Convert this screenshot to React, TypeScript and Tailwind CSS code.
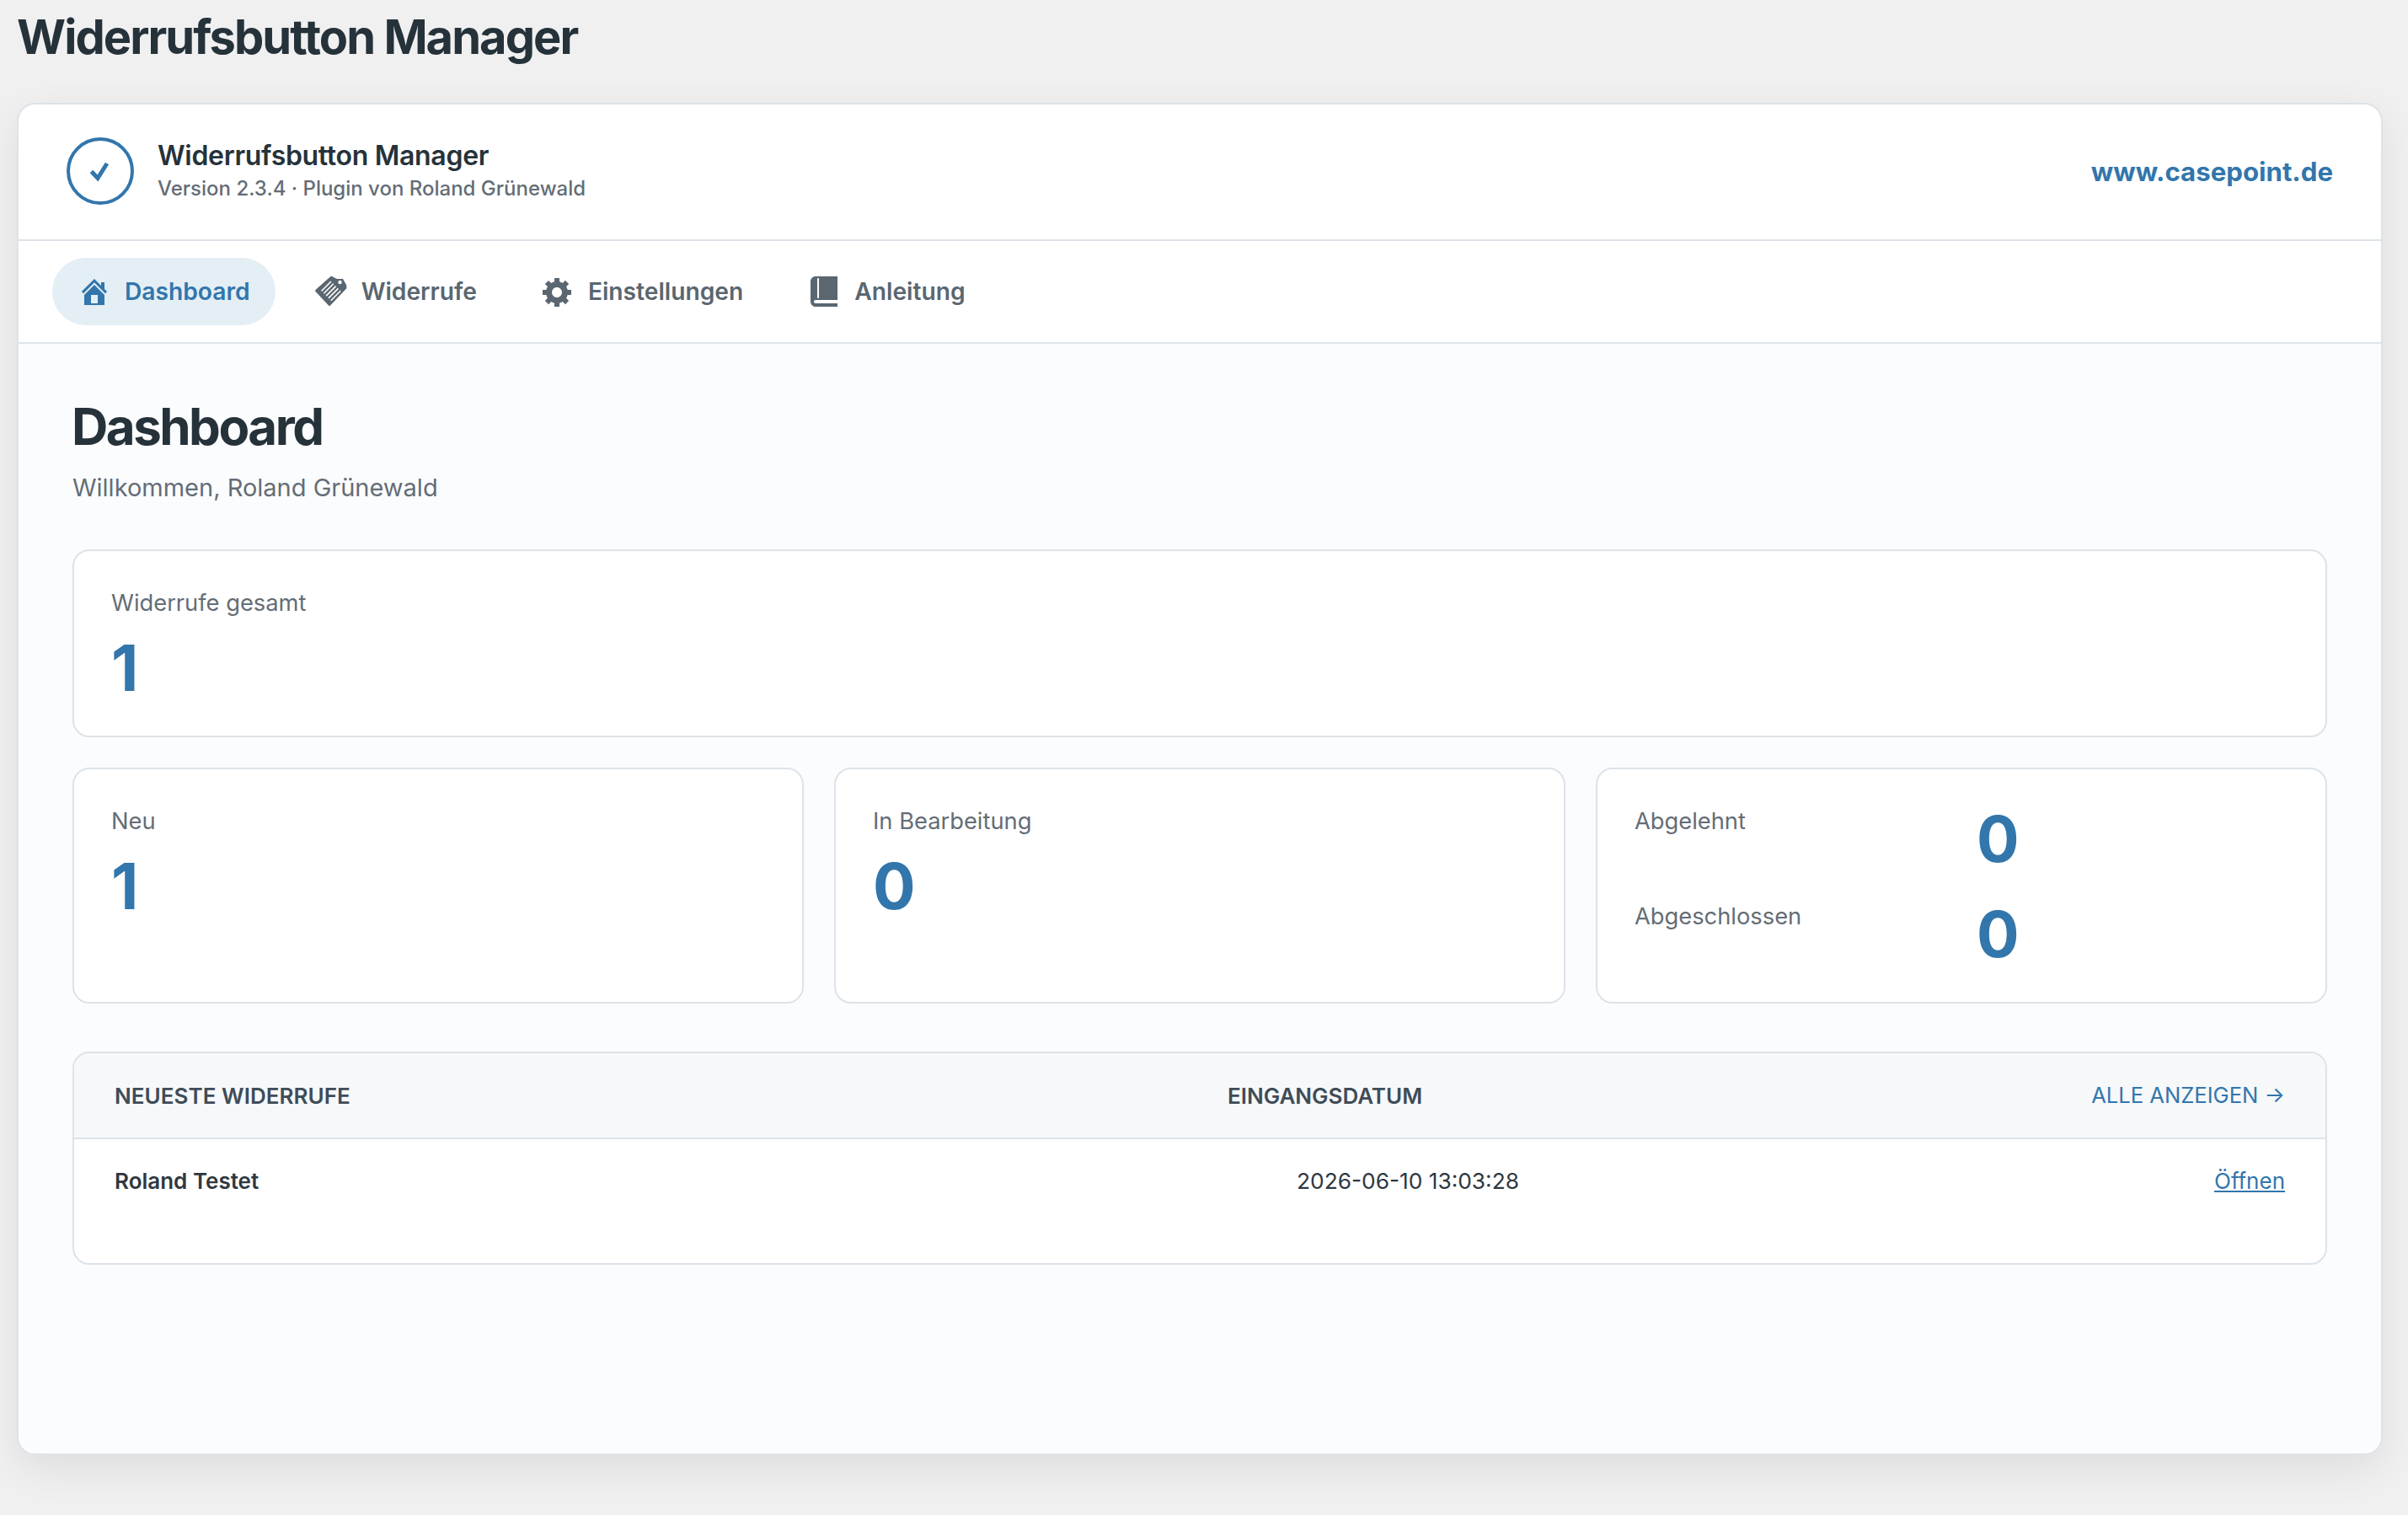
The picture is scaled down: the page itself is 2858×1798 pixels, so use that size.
function HomeIcon() {
  return (
    <svg viewBox="0 0 20 20" className="w-10 h-10 fill-current shrink-0" aria-hidden="true">
      <path d="M16 8.5l1.53 1.53-1.06 1.06L10 4.62l-6.47 6.47-1.06-1.06L10 2.5l4 4v-2h2v4zm-6-2.46l6 5.99V18H4v-5.97zM12 17v-5H8v5h4z" />
    </svg>
  );
}

function TagIcon() {
  return (
    <svg viewBox="0 0 40 40" className="w-10 h-10 shrink-0" aria-hidden="true">
      <path
        d="M20 1.5 L27 5 L34 5 L38 12 L38.5 16 L19 36.5 Q18 37.5 17 36.5 L1.5 20 Q.5 19 1.5 18 Z"
        fill="currentColor"
      />
      <circle cx="30.5" cy="9" r="2.2" fill="#fff" />
      <g stroke="#fff" strokeWidth="1.6">
        <path d="M8.5 19.5 L20 8" />
        <path d="M11.3 22.3 L22.8 10.8" />
        <path d="M14.1 25.1 L25.6 13.6" />
        <path d="M16.9 27.9 L28.4 16.4" />
        <path d="M19.7 30.7 L31.2 19.2" />
      </g>
    </svg>
  );
}

function GearIcon() {
  return (
    <svg viewBox="0 0 20 20" className="w-10 h-10 fill-current shrink-0" aria-hidden="true">
      <path d="M18 12h-2.18c-.17.7-.44 1.35-.81 1.93l1.54 1.54-2.1 2.1-1.54-1.54c-.58.36-1.23.63-1.91.79V19H8v-2.18c-.68-.16-1.33-.43-1.91-.79l-1.54 1.54-2.12-2.12 1.54-1.54c-.36-.58-.63-1.23-.79-1.91H1V9.03h2.17c.16-.7.44-1.35.8-1.94L2.43 5.55l2.1-2.1 1.54 1.54c.58-.37 1.24-.64 1.93-.81V2h3v2.18c.68.16 1.33.43 1.91.79l1.54-1.54 2.12 2.12-1.54 1.54c.36.59.64 1.24.8 1.94H18V12zm-8.5 1.5c1.66 0 3-1.34 3-3s-1.34-3-3-3-3 1.34-3 3 1.34 3 3 3z" />
    </svg>
  );
}

function BookIcon() {
  return (
    <svg viewBox="0 0 20 20" className="w-10 h-10 fill-current shrink-0" aria-hidden="true">
      <path d="M5 17h13v2H5c-1.66 0-3-1.34-3-3V4c0-1.66 1.34-3 3-3h13v14H5c-.55 0-1 .45-1 1s.45 1 1 1zm2-3.5v-11c0-.28-.22-.5-.5-.5s-.5.22-.5.5v11c0 .28.22.5.5.5s.5-.22.5-.5z" />
    </svg>
  );
}

function NavItem({ icon, label, active }: { icon: React.ReactNode; label: string; active?: boolean }) {
  return (
    <a
      href="#"
      className={
        active
          ? "flex items-center gap-4 h-20 px-[30px] rounded-full bg-[#e4eef5] text-[#3276ac] text-[28.2px] font-semibold"
          : "flex items-center gap-4 h-20 px-[30px] rounded-full text-[#5a6670] text-[28.2px] font-semibold"
      }
    >
      {icon}
      <span>{label}</span>
    </a>
  );
}

function StatCard({ label, value }: { label: string; value: string }) {
  return (
    <div className="bg-white border-2 border-[#dde3e8] rounded-[20px] px-[44px] pt-[42px] pb-[36px]">
      <div className="text-[27.3px] leading-[40px] text-[#646d76]">{label}</div>
      <div className="text-[75px] leading-[88px] font-bold text-[#3276ac] mt-[13px]">{value}</div>
    </div>
  );
}

function SmallStat({ label, value }: { label: string; value: string }) {
  return (
    <>
      <div className="text-[27.3px] leading-[40px] text-[#646d76]">{label}</div>
      <div className="text-[75px] leading-[88px] font-bold text-[#3276ac] -mt-[3px]">{value}</div>
    </>
  );
}

export default function App() {
  return (
    <div className="min-h-screen bg-[#f0f0f1] font-['Inter',sans-serif] pb-[70px]">
      <h1 className="pl-[20px] pt-[10px] text-[56px] leading-[68px] font-bold tracking-[-1.95px] text-[#26323a]">
        Widerrufsbutton Manager
      </h1>

      <div className="ml-[20px] mr-[30px] mt-[44px] bg-white border-2 border-[#dde3e8] rounded-[22px] overflow-hidden shadow-[0_16px_48px_rgba(0,0,0,0.08)]">
        {/* Header */}
        <header className="flex items-center justify-between h-[162px] pl-[57px] pr-[57px] pb-[2px] border-b-2 border-[#dde3e8]">
          <div className="flex items-center gap-[28px]">
            <div className="flex items-center justify-center w-20 h-20 rounded-full border-4 border-[#3276ac]">
              <svg viewBox="0 0 80 80" className="w-20 h-20 shrink-0" aria-hidden="true">
                <path d="M29.5 40.5 L37 48.5 L48 31" fill="none" stroke="#3276ac" strokeWidth="5" />
              </svg>
            </div>
            <div className="-mt-[1px]">
              <div className="text-[32px] leading-[42px] font-semibold tracking-[-0.3px] text-[#26323a]">
                Widerrufsbutton Manager
              </div>
              <div className="text-[24px] leading-[36px] font-medium text-[#646d76]">
                Version 2.3.4 · Plugin von Roland Grünewald
              </div>
            </div>
          </div>
          <a href="#" className="text-[31.2px] font-bold text-[#3276ac] mt-[2px]">
            www.casepoint.de
          </a>
        </header>

        {/* Tabs */}
        <nav className="flex items-center gap-4 h-[122px] pl-[40px] border-b-2 border-[#dde3e8]">
          <NavItem icon={<HomeIcon />} label="Dashboard" active />
          <NavItem icon={<TagIcon />} label="Widerrufe" />
          <NavItem icon={<GearIcon />} label="Einstellungen" />
          <NavItem icon={<BookIcon />} label="Anleitung" />
        </nav>

        {/* Content */}
        <main className="bg-[#fbfcfe] px-[64px] pt-[64px] pb-[224px]">
          <h2 className="-ml-[1px] text-[60px] leading-[68px] font-bold tracking-[-2.5px] text-[#26323a]">
            Dashboard
          </h2>
          <p className="mt-[19px] text-[29px] leading-[40px] text-[#646d76]">Willkommen, Roland Grünewald</p>

          <div className="mt-[53px]">
            <StatCard label="Widerrufe gesamt" value="1" />
          </div>

          <div className="grid grid-cols-3 gap-[36px] mt-[36px]">
            <StatCard label="Neu" value="1" />
            <StatCard label="In Bearbeitung" value="0" />
            <div className="bg-white border-2 border-[#dde3e8] rounded-[20px] px-[44px] pt-[42px] pb-[36px] grid grid-cols-2 gap-x-[36px] gap-y-[28px] content-start">
              <SmallStat label="Abgelehnt" value="0" />
              <SmallStat label="Abgeschlossen" value="0" />
            </div>
          </div>

          {/* Neueste Widerrufe */}
          <div className="mt-[57px] bg-white border-2 border-[#dde3e8] rounded-[20px] overflow-hidden">
            <div className="grid grid-cols-[1321px_1fr_auto] items-center h-[102px] px-[48px] bg-[#f6f8fa] border-b-2 border-[#dde3e8] text-[26px]">
              <span className="font-semibold tracking-[0.05px] text-[#3f4c58]">NEUESTE WIDERRUFE</span>
              <span className="font-semibold text-[#3f4c58]">EINGANGSDATUM</span>
              <a href="#" className="text-[25.6px] text-[#3276ac]">
                ALLE ANZEIGEN →
              </a>
            </div>
            <div className="grid grid-cols-[1403px_1fr_auto] h-[147px] px-[48px] pt-[30px] text-[26px] leading-[40px]">
              <span className="font-semibold text-[#2f3840]">Roland Testet</span>
              <span className="text-[26.3px] text-[#2f3840]">2026-06-10 13:03:28</span>
              <a href="#" className="text-[#3276ac] underline">
                Öffnen
              </a>
            </div>
          </div>
        </main>
      </div>
    </div>
  );
}
